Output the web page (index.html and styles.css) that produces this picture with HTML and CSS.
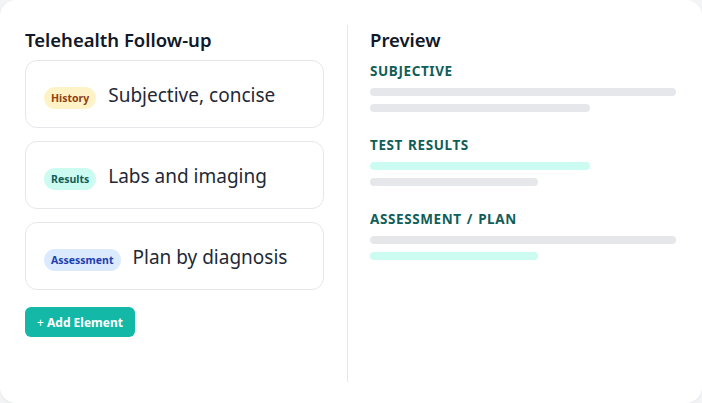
FILE: index.html
```html
<!DOCTYPE html>
<html lang="en">
<head>
  <meta charset="UTF-8">
  <meta name="viewport" content="width=device-width, initial-scale=1.0">
  <title>Telehealth Follow-up</title>
  <link rel="stylesheet" href="styles.css">
</head>
<body>
  <div class="builder">
    <div class="editor">
      <h2 class="panel-title">Telehealth Follow-up</h2>
      <div class="element">
        <span class="tag tag-history">History</span>
        <span class="element-text">Subjective, concise</span>
      </div>
      <div class="element">
        <span class="tag tag-results">Results</span>
        <span class="element-text">Labs and imaging</span>
      </div>
      <div class="element">
        <span class="tag tag-assessment">Assessment</span>
        <span class="element-text">Plan by diagnosis</span>
      </div>
      <button class="add-btn"><span class="plus">+</span> Add Element</button>
    </div>

    <div class="divider"></div>

    <div class="preview">
      <h2 class="panel-title">Preview</h2>
      <div class="section">
        <h3 class="section-title">SUBJECTIVE</h3>
        <div class="line gray" style="width: 100%"></div>
        <div class="line gray" style="width: 72%"></div>
      </div>
      <div class="section">
        <h3 class="section-title">TEST RESULTS</h3>
        <div class="line mint" style="width: 72%"></div>
        <div class="line gray" style="width: 55%"></div>
      </div>
      <div class="section">
        <h3 class="section-title">ASSESSMENT / PLAN</h3>
        <div class="line gray" style="width: 100%"></div>
        <div class="line mint" style="width: 55%"></div>
      </div>
    </div>
  </div>
</body>
</html>
```

FILE: styles.css
```css
body {
  margin: 0;
  padding: 0;
  background: #f3f4f6;
  font-family: 'Noto Sans', 'Open Sans', sans-serif;
  color: #111827;
}

.builder {
  box-sizing: border-box;
  width: 702px;
  height: 403px;
  background: white;
  border-radius: 16px;
  box-shadow: 0 1px 3px rgba(0, 0, 0, 0.06);
  padding: 25px 26px 21px 25px;
  display: grid;
  grid-template-columns: 300px 1px 1fr;
  column-gap: 22px;
}

.editor {
  padding-right: 1px;
}

.divider {
  background: #e5e7eb;
}

.panel-title {
  margin: 0;
  font-size: 18.5px;
  font-weight: 600;
  line-height: 30px;
  color: #111827;
}

.editor .panel-title {
  margin-bottom: 5px;
}

.element {
  box-sizing: border-box;
  height: 68px;
  border: 1px solid #e5e7eb;
  border-radius: 12px;
  padding: 21px 18px 0;
  margin-bottom: 13px;
  display: flex;
  align-items: baseline;
  gap: 12px;
}

.tag {
  font-size: 10.5px;
  font-weight: 700;
  line-height: 22px;
  padding: 0 7px;
  border-radius: 999px;
}

.tag-history {
  background: #fef3c7;
  color: #92400e;
}

.tag-results {
  background: #ccfbf1;
  color: #115e59;
}

.tag-assessment {
  background: #dbeafe;
  color: #1e40af;
}

.element-text {
  font-size: 19px;
  color: #1f2937;
}

.add-btn {
  margin-top: 4px;
  height: 30px;
  padding: 0 12px;
  border: none;
  border-radius: 6px;
  background: #14b8a6;
  color: white;
  font-family: inherit;
  font-size: 12px;
  font-weight: 700;
  cursor: pointer;
}

.add-btn .plus {
  font-weight: 400;
}

.preview .panel-title {
  margin-bottom: 7px;
}

.section {
  margin-bottom: 24px;
}

.section-title {
  margin: 0 0 8px;
  font-size: 13.5px;
  font-weight: 700;
  line-height: 18px;
  letter-spacing: 0.6px;
  word-spacing: 1px;
  color: #115e59;
}

.line {
  height: 8px;
  border-radius: 4px;
  margin-bottom: 8px;
}

.line.gray {
  background: #e5e7eb;
}

.line.mint {
  background: #ccfbf1;
}
```
